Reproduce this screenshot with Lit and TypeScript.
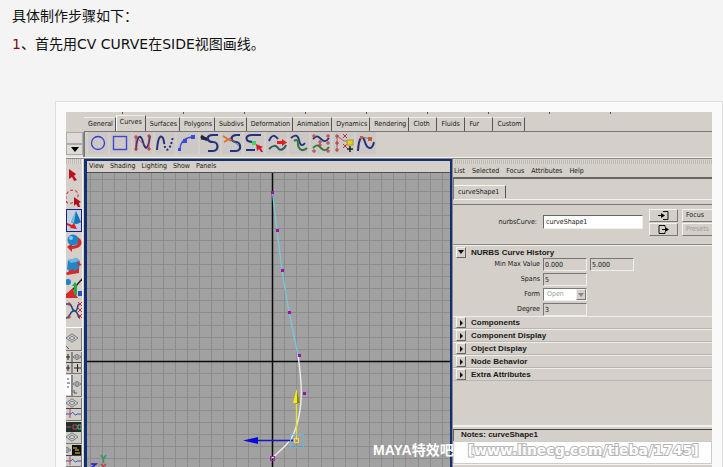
import { LitElement, html, svg, css } from "lit";
import { customElement, property } from "lit/decorators.js";

const TABS = ["General", "Curves", "Surfaces", "Polygons", "Subdivs", "Deformation", "Animation",
  "Dynamics", "Rendering", "Cloth", "Fluids", "Fur", "Custom"];

const pt = (x: number, y: number, c = "#c03038") => svg`<path d="M${x - 2} ${y - 2}l4 4m0 -4l-4 4" stroke=${c} fill="none"/>`;
const dot = (x: number, y: number) => svg`<path d="M${x - 2} ${y}h4M${x} ${y - 2}v4" stroke="#b83840" fill="none"/>`;

const SHELF = [
  { name: "Circle", art: svg`<circle cx="10" cy="10" r="6.500" stroke="#3a3ad0" stroke-width="1.300"/>` },
  { name: "Square", art: svg`<rect x="3.500" y="3.500" width="13" height="13" stroke="#4444d4" stroke-width="1.400"/>` },
  { name: "CV Curve", art: svg`<path d="M3 17C4 1 8 1 10 9S15 18 17 3" stroke="#26307c" stroke-width="1.800"/>
      <path d="M3 18V4L16 16V2" stroke="#c03038" stroke-width="0.800"/>${dot(3, 4)}${dot(16, 3)}${dot(3, 16)}${dot(16, 16)}` },
  { name: "EP Curve", art: svg`<path d="M2 17C3 0 8 1 9 9" stroke="#26307c" stroke-width="2"/>
      <path d="M9 9C10 20 15 20 18 3" stroke="#26307c" stroke-width="2" stroke-dasharray="2 2"/>` },
  { name: "Arc", art: svg`<path d="M3 16Q4 5 15 4" stroke="#3a4ac8" stroke-width="1.300"/>
      <path d="M1 15h3v3h-3zM6 6h4v4h-4zM14 2h4v4h-4z" fill="#3a4ae0" stroke="none"/>` },
  { name: "Attach", art: svg`<path d="M1 5l7 1M1 3l6 4" stroke="#202838" stroke-width="3"/>
      <path d="M18 2H13C5 2 7 9 13 9s6 9 0 9H8" stroke="#26307c" stroke-width="2.200"/>` },
  { name: "Detach", art: svg`<path d="M1 3l8 5M2 9l7 -4" stroke="#e07030" stroke-width="2"/>
      <path d="M18 2H15C7 2 9 9 14 9s6 9 0 9H8" stroke="#26307c" stroke-width="2.200"/>
      <path d="M9 6l8 7" stroke="#777"/>` },
  { name: "Insert Knot", art: svg`<path d="M17 2H8C0 2 1 9 9 9M2 17h9" stroke="#26307c" stroke-width="2"/>
      <rect x="8" y="8" width="4" height="4" fill="#30d868" stroke="none"/>
      <path d="M12 11l7 3-2 1 2 4-2 0-2-3-2 2z" fill="#d01828" stroke="none"/>` },
  { name: "Offset", art: svg`<path d="M2 8C5 1 8 2 11 6" stroke="#26307c" stroke-width="2"/>
      <path d="M2 16c4-4 7-4 9-1s6 2 8-3" stroke="#2c5a5c" stroke-width="2"/>
      <path d="M10 8h5v-2l5 3.500-5 3.500v-2h-5z" fill="#e02020" stroke="none"/>` },
  { name: "Align", art: svg`<path d="M2 5c4-4 7-3 8 2s3 7 6 3" stroke="#26307c" stroke-width="1.800"/>
      <path d="M5 8c3-2 4-1 4 3s4 9 9 4" stroke="#2c7a3c" stroke-width="2"/>` },
  { name: "Rebuild", art: svg`<path d="M2 6c4-4 5-3 8 0s5 3 8-1" stroke="#26307c" stroke-width="1.800"/>
      <path d="M2 15c4-4 5-3 8 0s5 3 8-1" stroke="#2c7a3c" stroke-width="1.800"/>
      ${dot(3, 3)}${dot(9, 9)}${dot(17, 3)}${dot(3, 18)}${dot(9, 12)}${dot(17, 18)}${dot(17, 10)}` },
  { name: "Add Points", art: svg`<path d="M3 18V3L10 8h4" stroke="#b06060"/>
      ${dot(3, 3)}${dot(3, 10)}${dot(3, 17)}${pt(11, 3)}${pt(11, 13)}
      <rect x="13" y="7" width="6" height="5" fill="#e4d020" stroke="#a89830"/>
      <path d="M16 13v6M13 16h6" stroke="#222" stroke-width="1.500"/>` },
  { name: "Curve Editing", art: svg`<path d="M2 18C3 2 7 2 9 9s7 9 9 0" stroke="#26307c" stroke-width="2"/>
      <path d="M5 4l11 2" stroke="#777"/>
      <path d="M4 3h3v3h-3zM12 4h4v4h-4z" fill="#c85830" stroke="none"/>` },
];

const TOOLS = [
  { name: "Select", art: svg`<path d="M3 5L10 10 8 12 11 16 8 17 6 13 3 15z" fill="#c01020"/>` },
  { name: "Lasso", art: svg`<path d="M0 12C-1 3 8 1 11 5s-1 7-2 9-8 4-9 0" fill="none" stroke="#c84048" stroke-width="1.200" stroke-dasharray="3 2"/>
      <path d="M8 10l7 5-2 1 1 4-2 0-2-3-2 2z" fill="#b01020"/>` },
  { name: "Move", art: svg`<path d="M10 2L15 13Q10 17 5 13z" fill="#1474b8"/><path d="M10 2L8 14 5 13z" fill="#6cc0e8"/>
      <path d="M1 14l5 2 2-2 3 6-7-1 1-1-4-2z" fill="#d82020"/>` },
  { name: "Rotate", art: svg`<path d="M9 4c10 3 8 13-3 13v3l-5-5 5-4v3c6 0 7-4 3-6z" fill="#d82828"/>
      <circle cx="7" cy="8" r="5.500" fill="#2084c8"/><circle cx="5" cy="6" r="2" fill="#80c8f0"/>` },
  { name: "Scale", art: svg`<path d="M2 5l9-2 3 3-1 9-9 2-3-3z" fill="#2484c4"/><path d="M2 5l9-2 3 3-9 2z" fill="#68b8e0"/>
      <path d="M0 18l7-4 1 2 5-3v5l-12 2zM11 6l5 4-4 1z" fill="#d82828"/>` },
  { name: "Manipulator", art: svg`<path d="M0 20L18 0" stroke="#222" stroke-width="1.500"/><circle cx="2" cy="5" r="3" fill="#2084c8"/>
      <path d="M0 17l7-6 1 4 4 6H0z" fill="#d82828"/><path d="M8 18V9h-2l3-4 3 4h-1v9z" fill="#28a848"/>
      <path d="M12 14h5v5h-5z" fill="#2850c8"/>` },
  { name: "Soft Modification", art: svg`<path d="M0 4h3c4 0 2 7 6 7s1-7 5-7M0 18c5 0 3-7 8-7s3 7 6 7" fill="none" stroke="#26407c" stroke-width="1.500"/>
      ${dot(3, 4)}${pt(14, 4)}${pt(14, 10)}${dot(3, 17)}${pt(14, 16)}` },
];

const diamond = (cx: number, cy: number, s: number) => svg`<path
  d="M${cx - s} ${cy}L${cx} ${cy - s * 0.7}L${cx + s} ${cy}L${cx} ${cy + s * 0.7}Z M${cx - s / 2} ${cy}L${cx} ${cy - s / 3}L${cx + s / 2} ${cy}L${cx} ${cy + s / 3}Z"
  fill="#ccd4cc" stroke="#667" stroke-width="0.800"/>`;
const wave = (y: number) => svg`<path d="M0 ${y}h5c3-5 3 4 6 0h6" fill="none" stroke="#3058b0"/><path d="M4 ${y - 5}v9" stroke="#c04050"/>`;

const LAYOUTS = [
  { name: "Single perspective view", h: 22, art: svg`${diamond(6, 10, 6)}<path d="M0 18l3 3" stroke="#c03038"/>` },
  { name: "Four view", h: 21, art: svg`<path d="M6 0v21M0 10.500h17" stroke="#444"/>${diamond(11, 5, 4)}
      <path d="M8 16h7M11.500 12v8M0 5h4M0 16h4M2 2v6M2 13v6" stroke="#222"/>` },
  { name: "Outliner and perspective", h: 21, art: svg`<rect width="5" height="20" fill="#fff"/>
      <path d="M6 0v21M1 4h2M1 8h3M1 12h2" stroke="#444"/>${diamond(11, 9, 4)}<path d="M8 15v3h3" stroke="#555" fill="none"/>` },
  { name: "Perspective and graph", h: 22, art: svg`${diamond(6, 5, 6)}<path d="M0 10.500h17" stroke="#444"/>${wave(16)}` },
  { name: "Hypershade and perspective", h: 21, art: svg`<rect width="16" height="10" fill="#252c2c"/>
      <path d="M0 5h5M7 3h4v4h-4z" stroke="#b05060" fill="none"/><path d="M12 3h3v4h-3z" stroke="#50c070" fill="none"/>${diamond(6, 15, 6)}` },
  { name: "Perspective, hypergraph and graph", h: 21, art: svg`${diamond(1, 5, 4)}<rect x="6" width="10" height="10" fill="#111"/>
      <path d="M7 3h4M9 5h4M9 8h5" stroke="#e0d030"/><path d="M0 10.500h17" stroke="#444"/>${wave(16)}` },
];

const GRID_STEP = 12.13;
const AXIS_X = 185;
const AXIS_Y = 188;
const gridPath = () => {
  let d = "";
  for (let i = -16; i < 120; i++) {
    const x = Math.round(AXIS_X + i * GRID_STEP) + 0.5;
    const y = Math.round(AXIS_Y + i * GRID_STEP) + 0.5;
    d += `M${x} 0V900M0 ${y}H1600`;
  }
  return d;
};

/** Orthographic side view with its grid, the drawn curve and the move manipulator. */
@customElement("side-view")
export class SideView extends LitElement {
  static styles = css`
    :host { display: flex; flex-direction: column; min-width: 0; border: 2px solid #12306e; border-left-width: 3px; background: #d4cfc8; }
    .menu { display: flex; gap: 6px; height: 11px; padding-left: 2px; border-bottom: 1px solid #505050; }
    .menu button { border: 0; padding: 0; background: none; font: inherit; color: #181818; }
    .canvas { display: block; width: 100%; flex: 1; min-height: 300px; background: #a1a1a1; }
  `;

  render() {
    const cvs = [[185, 19], [190, 57], [195, 97], [202, 139], [212, 182], [217, 220]];
    return html`
      <nav class="menu">${["View", "Shading", "Lighting", "Show", "Panels"].map((m) => html`<button>${m}</button>`)}</nav>
      <svg class="canvas" role="img" aria-label="Side view">
        <path d=${gridPath()} stroke="#8c8c8c" fill="none"/>
        <path d="M${AXIS_X + 0.5} 0V900M0 ${AXIS_Y + 0.5}H1600" stroke="#0a0a0a" stroke-width="1.500"/>
        <path d="M185.500 20L190 57L195 97L202 139L211 182" fill="none" stroke="#78c8dc" stroke-width="1.300"/>
        <path d="M211 182C215 210 217 235 207 260C203 270 194 277 185 285" fill="none" stroke="#ececec" stroke-width="1.400"/>
        <path d="M209.500 267V231" stroke="#e8e020" stroke-width="1.300"/>
        <path d="M206 230L209.500 216L213 230z" fill="#f4ec08"/><path d="M210 217L213 230H210z" fill="#8c8410"/>
        <path d="M206 267.500H171" stroke="#1818c8" stroke-width="1.300"/>
        <path d="M156 267.500L171 264V271z" fill="#0808d8"/>
        <rect x="203.500" y="261.500" width="13" height="13" fill="none" stroke="#70b4dc"/>
        <rect x="207.500" y="265.500" width="4" height="4" fill="none" stroke="#f0d840"/>
        ${cvs.map(([x, y]) => svg`<rect x=${x - 1} y=${y - 1} width="3" height="3" fill="#a010a8"/>`)}
        <rect x="183.500" y="283.500" width="4" height="4" fill="none" stroke="#a020a8"/>
        <path d="M14 282l2.500 4 2.500-4M16.500 286v4" fill="none" stroke="#309868" stroke-width="1.500"/>
        <path d="M4 291h5l-5 4h5" fill="none" stroke="#2020c0" stroke-width="1.500"/>
        <path d="M14 291l5 5m0-5l-5 5" stroke="#c03838" stroke-width="1.300"/>
      </svg>`;
  }
}

/** Attribute editor for the selected node. */
@customElement("attribute-editor")
export class AttributeEditor extends LitElement {
  @property() node = "curveShape1";

  static styles = css`
    :host { display: flex; flex-direction: column; min-width: 0; background: #d4cfc8; color: #181818; border-left: 1px solid #8c8a88; overflow: hidden; }
    button, input, select { font: inherit; color: inherit; box-sizing: border-box; margin: 0; padding: 0; border-radius: 0; }
    .grip { height: 4px; margin: 1px 0 1px 2px; background: repeating-linear-gradient(90deg, #bcb8b2 0 1px, #d8d4ce 1px 2px); }
    .menu { display: flex; gap: 7px; height: 12px; padding-left: 1px; border-bottom: 2px solid #686664; }
    .menu button { border: 0; background: none; }
    .tabs { display: flex; height: 21px; padding-top: 6px; box-sizing: border-box; border-bottom: 1px solid #f4f2ee; border-left: 1px solid #777; }
    .tab { width: 52px; height: 13px; border: 0; border-top: 1px solid #f8f6f2; border-right: 1px solid #555; background: none; text-align: left; padding-left: 4px; }
    .name { display: flex; align-items: center; gap: 6px; height: 41px; box-sizing: border-box; margin-top: 4px; border-top: 1px solid #777; border-bottom: 1px solid #888; padding-bottom: 5px; }
    .label { width: 84px; flex: none; text-align: right; white-space: nowrap; }
    .text { flex: none; width: 100px; height: 14px; padding-left: 2px; border: 1px solid; border-color: #666 #eee #eee #666; background: #fff; }
    .pair { display: grid; gap: 1px; flex: none; width: 29px; }
    .pair.wide { flex: 1; min-width: 0; margin-left: -2px; }
    .push { height: 13px; display: grid; place-items: center; border: 1px solid; border-color: #f4f2ee #777 #777 #f4f2ee; background: #d4cfc8; }
    .pair.wide .push { display: block; text-align: left; padding-left: 3px; border-right: 0; white-space: nowrap; }
    .push:disabled { color: #a09c98; }
    .head { display: flex; align-items: center; gap: 5px; margin: 0; height: 12px; padding-left: 3px; border-top: 1px solid #f0eeea; font-size: 8px; font-weight: bold; font-family: "Liberation Sans", sans-serif; }
    .twist { width: 10px; height: 11px; display: grid; place-items: center; border: 1px solid; border-color: #f4f2ee #666 #666 #f4f2ee; background: #d4cfc8; }
    .rows { display: grid; gap: 2px; }
    .row { display: flex; align-items: center; gap: 3px; height: 13px; }
    .row .label { width: 87px; }
    .field { width: 44px; height: 13px; padding-left: 1px; border: 1px solid; border-color: #777 #eee #eee #777; background: #d4cfc8; }
    .field.select { appearance: none; opacity: 1; color: #a09c98; padding-left: 3px; width: 44px; background: #fff; }
    .combo { position: relative; display: flex; }
    .drop { position: absolute; right: 1px; top: 1px; width: 10px; height: 11px; display: grid; place-items: center; background: #d4cfc8; border: 1px solid; border-color: #eee #777 #777 #eee; box-sizing: border-box; pointer-events: none; }
    .closed { display: grid; }
    .closed .head { border-bottom: 1px solid #b8b4b0; height: 11px; }
    .notes { display: block; margin-top: 44px; border-top: 2px solid #f2f0ec; font: bold 8px "Liberation Sans", sans-serif; }
    .caption { display: block; margin-top: 2px; border-top: 1px solid #444; border-left: 1px solid #666; padding: 0 0 2px 7px; height: 9px; line-height: 9px; }
    .area { display: block; width: 100%; height: 23px; resize: none; border: 1px solid #ccc; background: #fff; box-sizing: border-box; margin: 0; }
    .foot { height: 6px; border-top: 1px solid #f4f2ee; }
  `;

  private twist(open: boolean) {
    return html`<svg width="6" height="6"><path d=${open ? "M0 1h6l-3 4z" : "M2 0l3 3-3 3z"} fill="#111"/></svg>`;
  }

  private field(id: string, label: string, values: string[]) {
    return html`<div class="row"><label class="label" for=${id}>${label}</label>
      ${values.map((v, i) => html`<input class="field" id=${i ? id + i : id} aria-label=${label} .value=${v} readonly>`)}</div>`;
  }

  render() {
    return html`
      <div class="grip"></div>
      <nav class="menu">${["List", "Selected", "Focus", "Attributes", "Help"].map((m) => html`<button>${m}</button>`)}</nav>
      <div class="tabs"><button class="tab">${this.node}</button></div>
      <div class="name">
        <label class="label" for="node">nurbsCurve:</label>
        <input class="text" id="node" .value=${this.node}>
        <div class="pair">
          <button class="push" aria-label="Go to input"><svg width="11" height="9"><path d="M5 .5h5v8H5M0 4.500h5" fill="none" stroke="#111"/><path d="M3 2l4 2.500-4 2.500z"/></svg></button>
          <button class="push" aria-label="Go to output"><svg width="11" height="9"><path d="M7 2V.5H1v8h6V7M4 4.500h4" fill="none" stroke="#111"/><path d="M7 2l4 2.500-4 2.500z"/></svg></button>
        </div>
        <div class="pair wide">
          <button class="push">Focus</button>
          <button class="push" disabled>Presets</button>
        </div>
      </div>
      <h3 class="head"><button class="twist" aria-label="Collapse">${this.twist(true)}</button>NURBS Curve History</h3>
      <div class="rows">
        ${this.field("range", "Min Max Value", ["0.000", "5.000"])}
        ${this.field("spans", "Spans", ["5"])}
        <div class="row"><label class="label" for="form">Form</label>
          <span class="combo"><select class="field select" id="form" disabled><option>Open</option></select>
          <span class="drop"><svg width="6" height="4"><path d="M0 0h6l-3 4z" fill="#888"/></svg></span></span></div>
        ${this.field("degree", "Degree", ["3"])}
      </div>
      <div class="closed">
        ${["Components", "Component Display", "Object Display", "Node Behavior", "Extra Attributes"].map(
          (t) => html`<h3 class="head"><button class="twist" aria-label="Expand">${this.twist(false)}</button>${t}</h3>`)}
      </div>
      <div class="notes"><label class="caption" for="notes">Notes: ${this.node}</label><textarea class="area" id="notes"></textarea></div>
      <div class="foot"></div>`;
  }
}

@customElement("app-root")
export class AppRoot extends LitElement {
  static styles = css`
    :host { display: block; height: 100vh; overflow: hidden; background: #f4f4f4; color: #111; font: 14px/28px "DejaVu Sans", "Noto Sans CJK SC", sans-serif; }
    .step { margin: 0 12px; padding-top: 2px; font-family: Verdana, "DejaVu Sans", "Noto Sans CJK SC", sans-serif; }
    .step + .step { padding-top: 0; }
    .number { color: #7a1010; }
    .figure { margin: 43px 0 0 55px; padding: 10px; border: 1px solid #dedede; background: #fafafa; }
    .shot { position: relative; display: flex; flex-direction: column; background: #d4cfc8; font: 7px/11px "DejaVu Sans Condensed", "Liberation Sans", sans-serif; color: #181818; overflow: hidden; }
    .status { display: flex; height: 3px; gap: 60px; padding-left: 56px; }
    .status i { width: 1px; height: 2px; background: #555; }
    .tabs { display: flex; height: 16px; margin-left: 18px; border-bottom: 1px solid #777; }
    .tab { box-sizing: border-box; min-width: 28px; height: 14px; margin: 2px 0 0; padding: 0 2px 0 4px; border: 0; border-top: 1px solid #eeece8; border-right: 1px solid #555; background: none; font: inherit; color: inherit; text-align: left; white-space: nowrap; }
    .tab.on { height: 16px; margin-top: 0; border-left: 1px solid #fff; padding: 0 3px 3px; }
    .shelf { display: grid; grid-template-columns: 18px 1fr; height: 25px; border-bottom: 1px solid #f4f2ee; }
    .pick { display: grid; grid-template-rows: 12px 11px; border-right: 1px solid #888; background: #e4e2de; }
    .pick button { border: 1px solid #aaa; padding: 0; background: #dedbd6; display: grid; place-items: center; }
    .icons { display: grid; grid-template-columns: repeat(13, minmax(0, 1fr)); width: 293px; padding: 0 0 0 2px; border-left: 1px solid #777; box-sizing: border-box; }
    .icon { border: 0; padding: 0; margin: 0 1px; background: #cbc8c5; height: 22px; display: grid; place-items: center; }
    .icon svg { fill: none; }
    .main { display: grid; grid-template-columns: 18px minmax(0, 368fr) minmax(0, 260fr); border-top: 1px solid #8a8886; }
    .box { display: flex; flex-direction: column; border-right: 1px solid #f4f2ee; margin-right: 1px; overflow: hidden; }
    .grip { height: 5px; background: repeating-linear-gradient(90deg, #c0bcb6 0 1px, #dcd8d2 1px 2px); }
    .tools { display: grid; grid-template-rows: repeat(7, 1fr); height: 158px; }
    .tool { border: 0; padding: 0; background: none; overflow: hidden; display: block; line-height: 0; }
    .tool.on { background: #c4d0dc; box-shadow: inset 0 0 0 1px #1c1c84; }
    .layouts { display: grid; gap: 1px; margin-top: 5px; border-top: 1px solid #fff; }
    .layout { border: 0; border-right: 1px solid #777; border-bottom: 1px solid #777; padding: 0; background: #d0ccc6; display: block; line-height: 0; overflow: hidden; }
    .mark { position: absolute; left: 307px; top: 328px; display: flex; gap: 14px; align-items: center; white-space: nowrap; pointer-events: none; }
    .brand { font: bold 14px/20px "Liberation Sans", "Noto Sans CJK SC", sans-serif; color: #fff; }
    .site { font: bold 14px/20px "DejaVu Sans", sans-serif; color: #fff; -webkit-text-stroke: 2px #b4b4b4; paint-order: stroke fill; }
  `;

  render() {
    return html`
      <p class="step">具体制作步骤如下：</p>
      <p class="step"><span class="number">1</span>、首先用CV CURVE在SIDE视图画线。</p>
      <div class="figure"><div class="shot">
        <div class="status">${[1, 2, 3, 4, 5, 6, 7, 8, 9].map(() => html`<i></i>`)}</div>
        <div class="tabs">${TABS.map((t) => html`<button class="tab ${t === "Curves" ? "on" : ""}">${t}</button>`)}</div>
        <div class="shelf">
          <div class="pick"><button aria-label="Shelf tab"></button>
            <button aria-label="Shelf menu"><svg width="8" height="5"><path d="M0 0h8l-4 5z"/></svg></button></div>
          <div class="icons">${SHELF.map((s) => html`<button class="icon" aria-label=${s.name}><svg width="20" height="20">${s.art}</svg></button>`)}</div>
        </div>
        <div class="main">
          <div class="box">
            <div class="grip"></div>
            <div class="tools">${TOOLS.map((t) => html`<button class="tool ${t.name === "Move" ? "on" : ""}" aria-label=${t.name}><svg width="17" height="22">${t.art}</svg></button>`)}</div>
            <div class="layouts">${LAYOUTS.map((l) => html`<button class="layout" aria-label=${l.name}><svg width="17" height=${l.h}>${l.art}</svg></button>`)}</div>
          </div>
          <side-view></side-view>
          <attribute-editor></attribute-editor>
        </div>
        <div class="mark"><span class="brand">MAYA特效吧</span><span class="site">[www.linecg.com/tieba/1745]</span></div>
      </div></div>`;
  }
}
